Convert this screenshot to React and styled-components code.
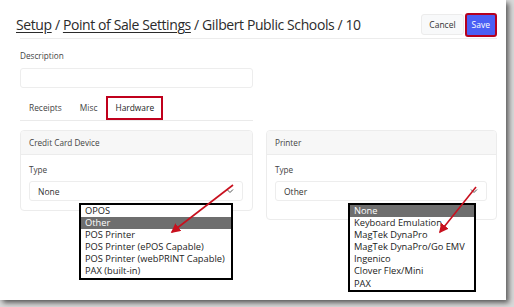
import styled, { createGlobalStyle } from "styled-components";

const Global = createGlobalStyle`
  html, body { margin: 0; padding: 0; background: #d9d9d9; }
  body { font-family: "Open Sans", "Noto Sans", sans-serif; }
`;

const Page = styled.div`
  width: 514px;
  height: 307px;
  overflow: hidden;
`;

const Frame = styled.div`
  position: relative;
  width: 506px;
  height: 300px;
  background: #fff;
  box-shadow: 3px 3px 5px rgba(0, 0, 0, 0.55), -2px 0 4px rgba(0, 0, 0, 0.12);
  box-sizing: border-box;
`;

const Header = styled.div`
  display: flex;
  align-items: center;
  justify-content: space-between;
  padding: 11px 9px 0 16px;
  height: 27px;
  box-sizing: content-box;
`;

const Title = styled.h1`
  margin: 0;
  font-family: "Open Sans", sans-serif;
  font-size: 14px;
  letter-spacing: -0.4px;
  font-weight: 400;
  color: #2b2b2b;
  white-space: nowrap;
  a { color: inherit; text-decoration: underline; text-underline-offset: 2px; }
`;

const Actions = styled.div`
  display: flex;
  align-items: center;
  gap: 1px;
`;

const Button = styled.button`
  font-family: inherit;
  font-size: 8.5px;
  height: ${(p) => (p.$primary ? "24px" : "21px")};
  padding: 0 ${(p) => (p.$primary ? "5px" : "7px")};
  border-radius: 3px;
  border: ${(p) => (p.$primary ? "2px solid #b5001f" : "1px solid #ececec")};
  background: ${(p) => (p.$primary ? "#4b5ff5" : "#f8f9fa")};
  color: ${(p) => (p.$primary ? "#fff" : "#333")};
`;

const Body = styled.div`
  margin: 0 9px 0 20px;
  border-top: 1px solid #ececec;
  padding-top: 11px;
`;

const Label = styled.div`
  font-size: 8.2px;
  color: #444;
  line-height: 12px;
  margin-bottom: ${(p) => p.$gap || 6}px;
`;

const Input = styled.div`
  width: 233px;
  height: 20px;
  border: 1px solid #ededed;
  border-radius: 3px;
  box-sizing: border-box;
`;

const Tabs = styled.div`
  display: flex;
  width: 233px;
  margin-top: 7px;
  border-bottom: 1px solid #eaeaea;
  height: 25px;
  align-items: center;
`;

const Tab = styled.div`
  font-size: 8.4px;
  color: ${(p) => (p.$active ? "#222" : "#444")};
  padding: 0 7px;
  height: 24px;
  display: flex;
  align-items: center;
  box-sizing: border-box;
  border: 2px solid ${(p) => (p.$active ? "#c0001c" : "transparent")};
`;

const Cards = styled.div`
  display: grid;
  grid-template-columns: 233px 231px;
  gap: 13px;
  margin-top: 9px;
  align-items: start;
`;

const Card = styled.div`
  border: 1px solid #ececec;
  border-radius: 4px;
  box-sizing: border-box;
`;

const CardHead = styled.div`
  height: 23px;
  background: #f7f7f7;
  border-bottom: 1px solid #ececec;
  display: flex;
  align-items: center;
  padding: 0 8px;
  font-size: 8.2px;
  color: #444;
  border-radius: 4px 4px 0 0;
`;

const CardBody = styled.div`
  padding: 9px 9px ${(p) => p.$bottom}px 8px;
`;

const SelectWrap = styled.div`
  position: relative;
`;

const Select = styled.div`
  height: 20px;
  border: 1px solid #ededed;
  border-radius: 3px;
  box-sizing: border-box;
  display: flex;
  align-items: center;
  justify-content: space-between;
  padding: 0 8px 0 8px;
  font-size: 8.5px;
  color: #333;
`;

const Options = styled.div`
  position: absolute;
  top: 22px;
  left: ${(p) => p.$left}px;
  width: ${(p) => p.$width}px;
  border: 2px solid #000;
  background: #fff;
  box-sizing: border-box;
  z-index: 2;
`;

const Option = styled.div`
  height: 12.1px;
  line-height: 12.1px;
  font-size: 9.3px;
  padding-left: 4px;
  color: ${(p) => (p.$selected ? "#fff" : "#222")};
  background: ${(p) => (p.$selected ? "#6e6e6e" : "transparent")};
  white-space: nowrap;
  overflow: hidden;
`;

const Arrows = styled.svg`
  position: absolute;
  left: 0;
  top: 0;
  z-index: 5;
  pointer-events: none;
`;

const Chevron = () => (
  <svg width="8" height="6" viewBox="0 0 8 6">
    <path d="M1 1.5 L4 4.5 L7 1.5" fill="none" stroke="#555" strokeWidth="1" />
  </svg>
);

function Dropdown({ value, options, selected, left, width }) {
  return (
    <SelectWrap>
      <Select>
        <span>{value}</span>
        <Chevron />
      </Select>
      <Options $left={left} $width={width}>
        {options.map((o) => (
          <Option key={o} $selected={o === selected}>{o}</Option>
        ))}
      </Options>
    </SelectWrap>
  );
}

export default function App() {
  return (
    <Page>
      <Global />
      <Frame>
        <Header>
          <Title>
            <a>Setup</a> / <a>Point of Sale Settings</a> / Gilbert Public Schools / 10
          </Title>
          <Actions>
            <Button>Cancel</Button>
            <Button $primary>Save</Button>
          </Actions>
        </Header>
        <Body>
          <Label>Description</Label>
          <Input />
          <Tabs>
            <Tab>Receipts</Tab>
            <Tab>Misc</Tab>
            <Tab $active>Hardware</Tab>
          </Tabs>
          <Cards>
            <Card>
              <CardHead>Credit Card Device</CardHead>
              <CardBody $bottom={9}>
                <Label $gap={5}>Type</Label>
                <Dropdown
                  value="None"
                  left={50}
                  width={154}
                  selected="Other"
                  options={[
                    "OPOS",
                    "Other",
                    "POS Printer",
                    "POS Printer (ePOS Capable)",
                    "POS Printer (webPRINT Capable)",
                    "PAX (built-in)",
                  ]}
                />
              </CardBody>
            </Card>
            <Card>
              <CardHead>Printer</CardHead>
              <CardBody $bottom={18}>
                <Label $gap={5}>Type</Label>
                <Dropdown
                  value="Other"
                  left={73}
                  width={128}
                  selected="None"
                  options={[
                    "None",
                    "Keyboard Emulation",
                    "MagTek DynaPro",
                    "MagTek DynaPro/Go EMV",
                    "Ingenico",
                    "Clover Flex/Mini",
                    "PAX",
                  ]}
                />
              </CardBody>
            </Card>
          </Cards>
        </Body>
        <Arrows width="506" height="300" viewBox="0 0 506 300">
          <defs>
            <marker id="head" markerWidth="6" markerHeight="6" refX="5" refY="3" orient="auto">
              <path d="M0 0 L6 3 L0 6 Z" fill="#c8101e" />
            </marker>
          </defs>
          <line x1="233" y1="185" x2="172" y2="232" stroke="#c8101e" strokeWidth="1.6" markerEnd="url(#head)" />
          <line x1="476" y1="187" x2="440" y2="232" stroke="#c8101e" strokeWidth="1.6" markerEnd="url(#head)" />
        </Arrows>
      </Frame>
    </Page>
  );
}
